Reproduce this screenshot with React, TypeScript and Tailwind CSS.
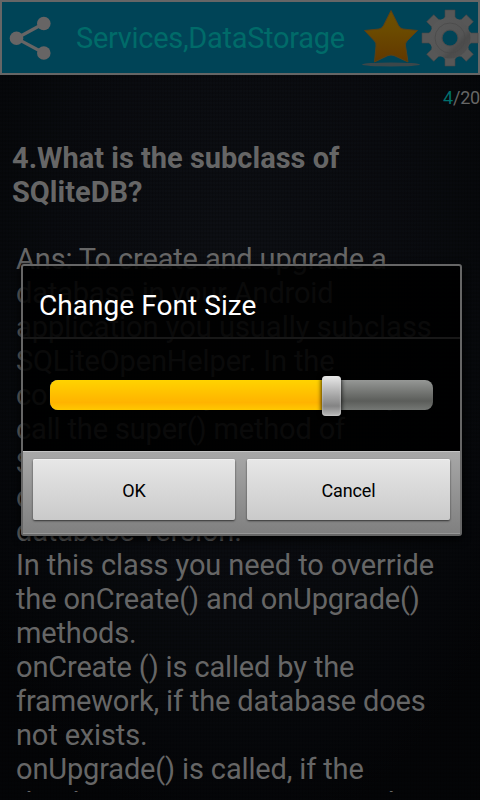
const answer = [
  'Ans: To create and upgrade a',
  'database in your Android',
  'application you usually subclass',
  'SQLiteOpenHelper. In the',
  'constructor of your subclass you',
  'call the super() method of',
  'SQLiteOpenHelper, specifying',
  'database name and the current',
  'database version.',
  'In this class you need to override',
  'the onCreate() and onUpgrade()',
  'methods.',
  'onCreate () is called by the',
  'framework, if the database does',
  'not exists.',
  'onUpgrade() is called, if the',
  'database version is increased in',
];

function ShareIcon() {
  return (
    <svg viewBox="0 0 42 44" className="h-11 w-[42px]" fill="#676565" stroke="#676565">
      <path d="M34.800 7.500 7.500 22.300 34.800 37" fill="none" strokeWidth="3.200" />
      <circle cx="34.800" cy="7.500" r="6.800" stroke="none" />
      <circle cx="7.500" cy="22.300" r="6.800" stroke="none" />
      <circle cx="34.800" cy="37" r="6.800" stroke="none" />
    </svg>
  );
}

function StarIcon() {
  return (
    <svg viewBox="0 0 60 60" className="size-[60px]">
      <defs>
        <linearGradient id="star" x1="0" y1="0" x2="0" y2="1">
          <stop offset="0" stopColor="#6c5000" />
          <stop offset="0.4" stopColor="#6b4a00" />
          <stop offset="1" stopColor="#623800" />
        </linearGradient>
      </defs>
      <ellipse cx="30" cy="56.500" rx="29" ry="2" fill="#3c474a" />
      <path
        d="M30 2.500 37.500 17.500Q39 20.500 42 21L56.500 22.500 46 33Q44 35 44.500 38L47 54 33 47.500Q30 46.500 27 47.500L13.500 54 15 38Q15.500 35 13.500 33L3.500 22.500 18 21Q21 20.500 22.500 17.500Z"
        fill="url(#star)"
        stroke="#594018"
      />
    </svg>
  );
}

function GearIcon() {
  const teeth = [0, 45, 90, 135, 180, 225, 270, 315];
  return (
    <svg viewBox="-29 -29 58 58" className="size-[58px]">
      <defs>
        <linearGradient id="gear" x1="0" y1="0" x2="1" y2="1">
          <stop offset="0" stopColor="#5a5a5a" />
          <stop offset="0.6" stopColor="#555" />
          <stop offset="0.7" stopColor="#4b4b4b" />
          <stop offset="1" stopColor="#545454" />
        </linearGradient>
        <mask id="hole">
          <rect x="-29" y="-29" width="58" height="58" fill="white" />
          <circle r="7.500" fill="black" />
        </mask>
      </defs>
      <g mask="url(#hole)">
        {teeth.map((a) => (
          <path
            key={a}
            d="M-7 -18-5 -21.500V-28H5V-21.500L7 -18Z"
            transform={`rotate(${a})`}
            fill="#575757"
            stroke="#484848"
            strokeWidth="0.600"
          />
        ))}
        <circle r="20.500" fill="url(#gear)" />
        <circle r="15" fill="none" stroke="#4a4a4a" strokeWidth="0.800" />
        <circle r="8" fill="none" stroke="#4c4c4c" />
      </g>
    </svg>
  );
}

function DialogButton({ label, className }: { label: string; className: string }) {
  return (
    <button
      className={`h-[61px] rounded-[2px] bg-linear-to-b from-[#e7e7e7] to-[#cacaca] pt-0.5 text-[18px] text-black shadow-[0_1px_2px_#333,inset_0_1px_0_#f2f2f2] ${className}`}
    >
      {label}
    </button>
  );
}

export default function App() {
  return (
    <div className="relative h-[800px] w-[480px] overflow-hidden bg-[repeating-linear-gradient(90deg,#0000_0_2px,#00000026_2px_3px),repeating-linear-gradient(0deg,#0000_0_2px,#00000026_2px_4px),radial-gradient(ellipse_320px_560px_at_50%_35%,#0e1015,#090b0f_60%,#040507)] font-[Roboto,sans-serif] text-[#666]">
      <header className="flex h-[75px] items-center border-2 border-[#666] bg-[#004457] pl-[7px]">
        <ShareIcon />
        <h1 className="ml-[25px] w-[285px] pt-[3px] text-[29px] tracking-[-0.3px] whitespace-nowrap text-[#006b69]">
          Services,DataStorage
        </h1>
        <div className="mt-px -mr-[3px] flex shrink-0 items-center">
          <StarIcon />
          <GearIcon />
        </div>
      </header>
      <div className="flex h-[46px] items-center justify-end pb-0.5 text-[18px] tracking-[-0.2px]">
        <span className="text-[#00706d]">4</span>/20
      </div>
      <main className="h-[671px] overflow-hidden">
        <h2 className="mt-[20px] ml-3 text-[29px] leading-[34px] font-bold whitespace-nowrap">
          4.What is the subclass of
          <br />
          SQliteDB?
        </h2>
        <div className="mt-[33px] ml-4 text-[29px] leading-[34px] tracking-[-0.15px] whitespace-nowrap">
          {answer.map((line, i) => (
            <p key={i} className={i === 2 ? 'tracking-normal' : i === 9 ? 'tracking-[-0.1px]' : ''}>
              {line}
            </p>
          ))}
        </div>
      </main>

      <div className="absolute top-[264px] left-[21px] flex h-[272px] w-[441px] flex-col rounded-[3px] border-2 border-[#666] bg-black/90 shadow-[0_3px_8px_#000]">
        <h3 className="h-[73px] shrink-0 border-b-2 border-[#181818] pt-[23px] pl-4 text-[28px] leading-[34px] tracking-[0.06px] whitespace-nowrap text-white">
          Change Font Size
        </h3>
        <div className="flex h-[112px] shrink-0 items-center pl-[27px]">
          <div className="relative h-[30px] w-[383px] rounded-lg bg-linear-to-b from-[#969896] via-[#5b5d5a] via-70% to-[#757875]">
            <div className="h-full w-[280px] rounded-l-lg bg-linear-to-b from-[#ffd300] via-[#ffb300] via-75% to-[#ffc800]" />
            <div className="absolute -top-1 left-[272px] h-10 w-[19px] rounded-[4px] bg-linear-to-b from-[#e9e9e9] via-[#848484] via-75% to-[#bbb] shadow-[0_0_5px_#000,inset_0_0_2px_#ddd]" />
          </div>
        </div>
        <div className="flex flex-1 items-start border-t border-b border-t-[#c4c4c4] border-b-[#969696] bg-linear-to-b from-[#a8a8a8] to-[#808080] pt-[7px] pl-[10px]">
          <DialogButton label="OK" className="w-[202px]" />
          <DialogButton label="Cancel" className="ml-3 w-[203px] tracking-[-0.1px]" />
        </div>
      </div>
    </div>
  );
}
